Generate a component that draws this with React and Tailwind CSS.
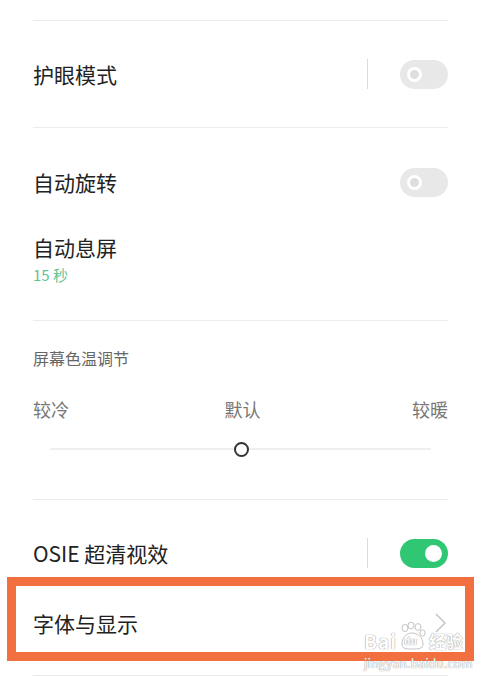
import React from 'react';

const Divider = () => <div className="mx-[33px] h-px bg-[#ececec]" />;

const Toggle = ({ on }) => (
    <div
        className={
            on
                ? 'flex h-[29px] w-[48px] items-center justify-end rounded-full bg-[#30c774] pr-[6px]'
                : 'flex h-[29px] w-[48px] items-center rounded-full bg-[#e8e8e8] pl-[7px]'
        }
    >
        {on ? (
            <div className="h-[17px] w-[17px] rounded-full bg-white" />
        ) : (
            <div className="h-[15px] w-[15px] rounded-full border-[3px] border-white bg-[#dedede]" />
        )}
    </div>
);

const Sep = () => <div className="mr-[32px] h-[30px] w-px bg-[#dcdcdc]" />;

const Watermark = () => (
    <div className="pointer-events-none absolute left-[364px] top-[622px] flex flex-col items-start text-white [text-shadow:0_0_1px_#9a9a9a,0_0_1px_#9a9a9a]">
        <div className="flex items-end">
            <span className="text-[19px] font-bold leading-[18px] tracking-[1px]">Bai</span>
            <div className="relative mx-[1px] h-[28px] w-[28px]">
                <svg viewBox="0 0 28 28" className="absolute inset-0 h-[28px] w-[28px]" fill="white" stroke="#b5b5b5" strokeWidth="0.8">
                    <ellipse cx="7" cy="6" rx="3" ry="3.6" />
                    <ellipse cx="13" cy="3.5" rx="3" ry="3.4" />
                    <ellipse cx="20" cy="5" rx="3" ry="3.4" />
                    <ellipse cx="24.5" cy="11" rx="2.6" ry="3.2" />
                    <path d="M4 22 C4 14 10 11 14 11 C19 11 25 15 25 22 C25 27 20 27 14 27 C8 27 4 27 4 22 Z" />
                </svg>
                <span className="absolute left-[6px] top-[13px] text-[10px] font-bold leading-[11px]">du</span>
            </div>
            <span className="ml-[2px] text-[17px] font-bold leading-[18px]">经验</span>
        </div>
        <span className="mt-[6px] text-[12px] leading-[13px] tracking-[0.3px]">jingyan.baidu.com</span>
    </div>
);

export default function App() {
    return (
        <div
            className="relative h-[677px] w-[481px] overflow-hidden bg-white text-[#222222]"
            style={{ fontFamily: '"Noto Sans CJK SC", "Noto Sans", sans-serif' }}
        >
            <div className="h-[20px]" />
            <Divider />

            {/* 护眼模式 */}
            <div className="flex h-[106px] items-center px-[33px]">
                <span className="flex-1 text-[21px] leading-[28px]">护眼模式</span>
                <Sep />
                <Toggle />
            </div>
            <Divider />

            {/* 自动旋转 / 自动息屏 */}
            <div className="flex h-[192px] flex-col px-[33px] pt-[12px]">
                <div className="flex h-[84px] items-center">
                    <span className="flex-1 text-[21px] leading-[28px]">自动旋转</span>
                    <Toggle />
                </div>
                <span className="mt-[9px] text-[21px] leading-[28px]">自动息屏</span>
                <span className="mt-[4px] text-[15px] leading-[20px] text-[#62c294]">15 秒</span>
            </div>
            <Divider />

            {/* 屏幕色温调节 */}
            <div className="flex h-[178px] flex-col px-[33px] pt-[27px]">
                <span className="text-[16px] leading-[20px] text-[#666666]">屏幕色温调节</span>
                <div className="mt-[29px] flex items-center justify-between text-[18px] leading-[24px] text-[#777777]">
                    <span>较冷</span>
                    <span className="ml-[4px]">默认</span>
                    <span>较暖</span>
                </div>
                <div className="relative mx-[17px] mt-[20px] flex h-[16px] items-center">
                    <div className="h-[2px] flex-1 bg-[#efefef]" />
                    <div className="absolute left-[184px] h-[15px] w-[15px] rounded-full border-[2.5px] border-[#333333] bg-white" />
                </div>
            </div>
            <Divider />

            {/* OSIE */}
            <div className="flex h-[77px] flex-col px-[33px] pt-[30px]">
                <div className="flex h-[46px] items-center">
                    <span className="flex-1 text-[21px] leading-[28px]">OSIE 超清视效</span>
                    <Sep />
                    <Toggle on />
                </div>
            </div>

            {/* 字体与显示 (highlighted) */}
            <div className="mx-[7px] flex h-[84px] items-center border-[9px] border-[#f2703f] pl-[17px] pr-[19px] pt-[8px]">
                <span className="flex-1 text-[21px] leading-[28px]">字体与显示</span>
                <svg width="11" height="20" viewBox="0 0 11 20" fill="none" stroke="#c4c4c4" strokeWidth="1.5">
                    <path d="M1 1 L10 10 L1 19" />
                </svg>
            </div>
            <div className="h-[14px]" />
            <Divider />

            <Watermark />
        </div>
    );
}
